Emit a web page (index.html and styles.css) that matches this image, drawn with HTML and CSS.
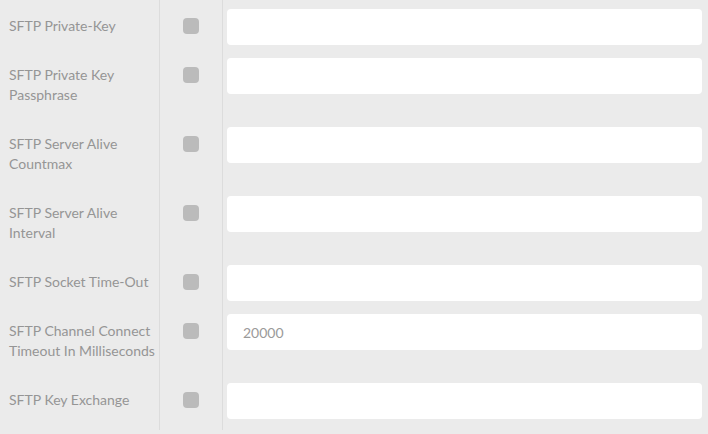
FILE: index.html
```html
<!DOCTYPE html>
<html lang="en">
<head>
    <meta charset="UTF-8">
    <meta name="viewport" content="width=device-width, initial-scale=1.0">
    <title>SFTP Settings</title>
    <link rel="stylesheet" href="styles.css">
</head>
<body>
    <div class="settings">
        <div class="row">
            <div class="label">SFTP Private-Key</div>
            <div class="check"><span class="box"></span></div>
            <div class="field"><input class="input" type="text"></div>
        </div>
        <div class="row">
            <div class="label">SFTP Private Key<br>Passphrase</div>
            <div class="check"><span class="box"></span></div>
            <div class="field"><input class="input" type="text"></div>
        </div>
        <div class="row">
            <div class="label">SFTP Server Alive<br>Countmax</div>
            <div class="check"><span class="box"></span></div>
            <div class="field"><input class="input" type="text"></div>
        </div>
        <div class="row">
            <div class="label">SFTP Server Alive<br>Interval</div>
            <div class="check"><span class="box"></span></div>
            <div class="field"><input class="input" type="text"></div>
        </div>
        <div class="row">
            <div class="label">SFTP Socket Time-Out</div>
            <div class="check"><span class="box"></span></div>
            <div class="field"><input class="input" type="text"></div>
        </div>
        <div class="row">
            <div class="label">SFTP Channel Connect<br>Timeout In Milliseconds</div>
            <div class="check"><span class="box"></span></div>
            <div class="field"><input class="input" type="text" value="20000"></div>
        </div>
        <div class="row">
            <div class="label">SFTP Key Exchange</div>
            <div class="check"><span class="box"></span></div>
            <div class="field"><input class="input" type="text"></div>
        </div>
    </div>
</body>
</html>
```

FILE: styles.css
```css
:root {
    --bg: #ebebeb;
    --line: #dcdcdc;
    --text: #959595;
    --box: #bbbbbb;
}

body {
    margin: 0;
    background: var(--bg);
    font-family: 'Lato', 'Liberation Sans', sans-serif;
    font-size: 14px;
    color: var(--text);
}

.settings {
    width: 708px;
}

.row {
    display: grid;
    grid-template-columns: 160px 63px 1fr;
}

.label {
    padding: 12px 0 17px 9px;
    line-height: 20px;
    border-right: 1px solid var(--line);
}

.check {
    display: flex;
    justify-content: center;
    align-items: flex-start;
    padding-top: 14px;
    border-right: 1px solid var(--line);
}

.box {
    width: 16px;
    height: 16px;
    border-radius: 4px;
    background: var(--box);
}

.field {
    padding: 5px 6px 0 4px;
}

.input {
    display: block;
    box-sizing: border-box;
    width: 100%;
    height: 36px;
    border: none;
    border-radius: 4px;
    background: #fff;
    padding: 0 16px;
    font-family: inherit;
    font-size: 14px;
    color: #9a9a9a;
    outline: none;
}

.row:first-child .label { padding-top: 16px; }
.row:first-child .check { padding-top: 18px; }
.row:first-child .field { padding-top: 9px; }

.row:last-child .label { padding-bottom: 20px; }
```
